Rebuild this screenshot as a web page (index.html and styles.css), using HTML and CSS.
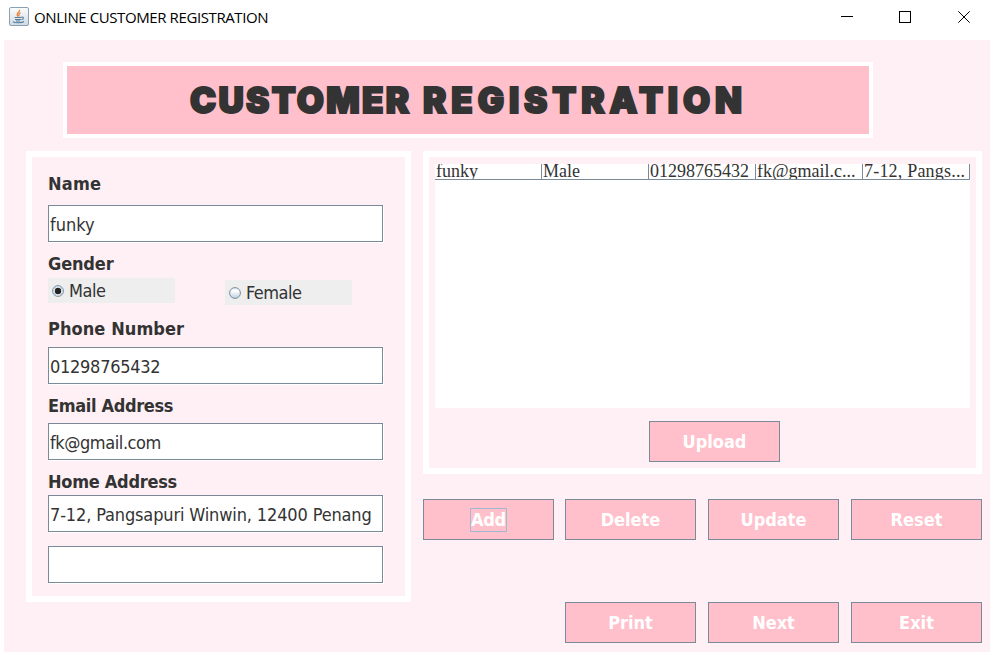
FILE: index.html
```html
<!DOCTYPE html>
<html lang="en">
<head>
<meta charset="utf-8">
<title>ONLINE CUSTOMER REGISTRATION</title>
<link rel="stylesheet" href="styles.css">
</head>
<body>
<header class="titlebar">
  <svg class="app-icon" width="20" height="19" viewBox="0 0 20 19">
    <defs><linearGradient id="tile" x1="0" y1="0" x2="0" y2="1"><stop offset="0" stop-color="#fdfdfd"/><stop offset="1" stop-color="#cfdae4"/></linearGradient></defs>
    <rect x=".5" y=".5" width="19" height="18" rx="1.5" fill="url(#tile)" stroke="#8ba0b2"/>
    <path d="M10.500 2.800C11.500 5 6 6 9 9.500M11.500 5.500C9 7 10 8 10 9.500" fill="none" stroke="#e8863f" stroke-width="1.300"/>
    <path d="M5.500 10.500H12.500M6 12.500H12M12.500 10C15 9.500 15 12 12.500 12.500M4 14.800C6 16.200 13 16.200 15 14.500M7 14H11" fill="none" stroke="#557d9c" stroke-width="1.100"/>
  </svg>
  <span class="window-title">ONLINE CUSTOMER REGISTRATION</span>
  <svg class="controls" width="131" height="14" viewBox="0 0 131 14" fill="none" stroke="#000">
    <path d="M0 6.500H12M58.500 1.500H69.500V12.500H58.500Z" shape-rendering="crispEdges"/>
    <path d="M117.300 1.300L128.700 12.700M128.700 1.300L117.300 12.700"/>
  </svg>
</header>
<main class="client">
  <h1 class="banner"><span class="word-one">CUSTOMER</span> <span class="word-two">REGISTRATION</span></h1>
  <div class="columns">
    <section class="form">
      <label class="label l-name">Name</label>
      <div class="field f-name"><span>funky</span></div>
      <label class="label l-gender">Gender</label>
      <div class="radios">
        <div class="radio">
          <svg width="12" height="12" viewBox="0 0 12 12"><circle cx="6" cy="6" r="5.400" fill="#fff" stroke="#7a8a99"/><circle cx="6" cy="6" r="4.400" fill="none" stroke="#b8cfe5"/><circle cx="6" cy="6" r="3.200" fill="#222"/></svg>
          <span>Male</span>
        </div>
        <div class="radio female">
          <svg width="12" height="12" viewBox="0 0 12 12"><defs><linearGradient id="dot" x1="0" y1="0" x2="0" y2="1"><stop offset="0" stop-color="#dde8f3"/><stop offset=".3" stop-color="#fff"/><stop offset="1" stop-color="#b8cfe5"/></linearGradient></defs><circle cx="6" cy="6" r="5.400" fill="url(#dot)" stroke="#7a8a99"/></svg>
          <span>Female</span>
        </div>
      </div>
      <label class="label l-phone">Phone Number</label>
      <div class="field f-phone"><span>01298765432</span></div>
      <label class="label l-email">Email Address</label>
      <div class="field f-email"><span>fk@gmail.com</span></div>
      <label class="label l-home">Home Address</label>
      <div class="field f-home"><span>7-12, Pangsapuri Winwin, 12400 Penang</span></div>
      <div class="field f-home2"></div>
    </section>
    <div class="side">
      <section class="records">
        <div class="table">
          <div class="row">
            <span>funky</span><span>Male</span><span>01298765432</span><span>fk@gmail.c...</span><span class="last">7-12, Pangs...</span>
          </div>
        </div>
        <button class="btn upload">Upload</button>
      </section>
      <div class="actions">
        <button class="btn"><span class="focus">Add</span></button>
        <button class="btn">Delete</button>
        <button class="btn">Update</button>
        <button class="btn">Reset</button>
      </div>
      <div class="actions lower">
        <button class="btn print">Print</button>
        <button class="btn">Next</button>
        <button class="btn">Exit</button>
      </div>
    </div>
  </div>
</main>
</body>
</html>
```
FILE: styles.css
```css
* { box-sizing: border-box; }
body { margin: 0; width: 993px; height: 655px; overflow: hidden; background: #fff; color: #333; font-family: "DejaVu Sans Condensed", "DejaVu Sans", sans-serif; }
.titlebar { height: 40px; display: flex; align-items: flex-start; padding: 7px 21px 0 9px; }
.app-icon { flex: none; }
.window-title { font: 15px/20px "Open Sans", sans-serif; color: #000; margin-left: 5px; letter-spacing: -.4px; white-space: nowrap; }
.controls { margin: 3px 0 0 auto; }
.client { width: 986px; height: 612px; margin-left: 4px; padding: 22px 0 0 22px; background: #fff0f5; }
.banner { width: 810px; height: 76px; margin: 0 0 13px 37px; border: 4px solid #fff; background: #ffc0cb; display: flex; align-items: center; padding-left: 123px; font: 900 35px/44px Inter, sans-serif; white-space: nowrap; -webkit-text-stroke: 2px #333; }
.word-one { width: 233px; letter-spacing: 2.3px; }
.word-two { letter-spacing: 4.9px; }
.columns { display: flex; gap: 12px; align-items: flex-start; }
.form { width: 385px; height: 451px; border: 6px solid #fff; padding: 16px 0 0 16px; }
.label { display: block; height: 22px; font-size: 18px; line-height: 22px; font-weight: bold; white-space: nowrap; }
.field { width: 335px; height: 37px; border: 1px solid #7a8a99; background: #fff; box-shadow: 1px 1px 0 #fff; padding: 1px 0 0 1px; font-size: 18px; line-height: 35px; white-space: nowrap; }
.l-name { letter-spacing: .25px; }
.l-gender { letter-spacing: -.15px; }
.f-name { margin: 10px 0 11px; }
.radios { display: flex; margin-top: 3px; gap: 50px; }
.radio { width: 127px; height: 25px; background: #eee; display: flex; align-items: center; padding-left: 4px; gap: 5px; font-size: 18px; line-height: 25px; letter-spacing: -.5px; }
.female { margin-top: 2px; }
.l-phone { margin-top: 13px; letter-spacing: .08px; }
.f-phone { margin: 7px 0 11px; letter-spacing: -.27px; }
.l-email { letter-spacing: -.35px; }
.f-email { margin: 6px 0 11px; letter-spacing: -.42px; }
.l-home { letter-spacing: -.27px; }
.f-home { margin: 2px 0 14px; letter-spacing: -.14px; }
.side { width: 559px; }
.records { height: 323px; border: 6px solid #fff; padding: 7px 6px 0; }
.table { width: 535px; height: 244px; background: #fff; }
.row { display: grid; grid-template-columns: repeat(5, 107px); height: 16px; border-bottom: 1px solid #7a8a99; font: 18px/15px "Liberation Serif", serif; }
.row span { height: 15px; border-right: 1px solid #7a8a99; overflow: hidden; padding-left: 1px; white-space: nowrap; }
.row .last { letter-spacing: .2px; }
.btn { width: 131px; height: 41px; padding: 0; border: 1px solid #7a8a99; border-radius: 0; background: #ffc0cb; color: #fff; font: bold 18px/22px "DejaVu Sans Condensed", "DejaVu Sans", sans-serif; }
.upload { display: block; margin: 13px 0 0 214px; }
.focus { display: inline-block; height: 24px; line-height: 24px; outline: 1px solid #a3b8cc; outline-offset: -1px; padding: 0 1px; letter-spacing: -.3px; }
.actions { display: flex; justify-content: flex-end; gap: 12px; margin-top: 25px; }
.actions .btn:first-child { margin-right: -1px; }
.lower { margin-top: 62px; }
.lower .btn:first-child { margin-right: 0; }
```
